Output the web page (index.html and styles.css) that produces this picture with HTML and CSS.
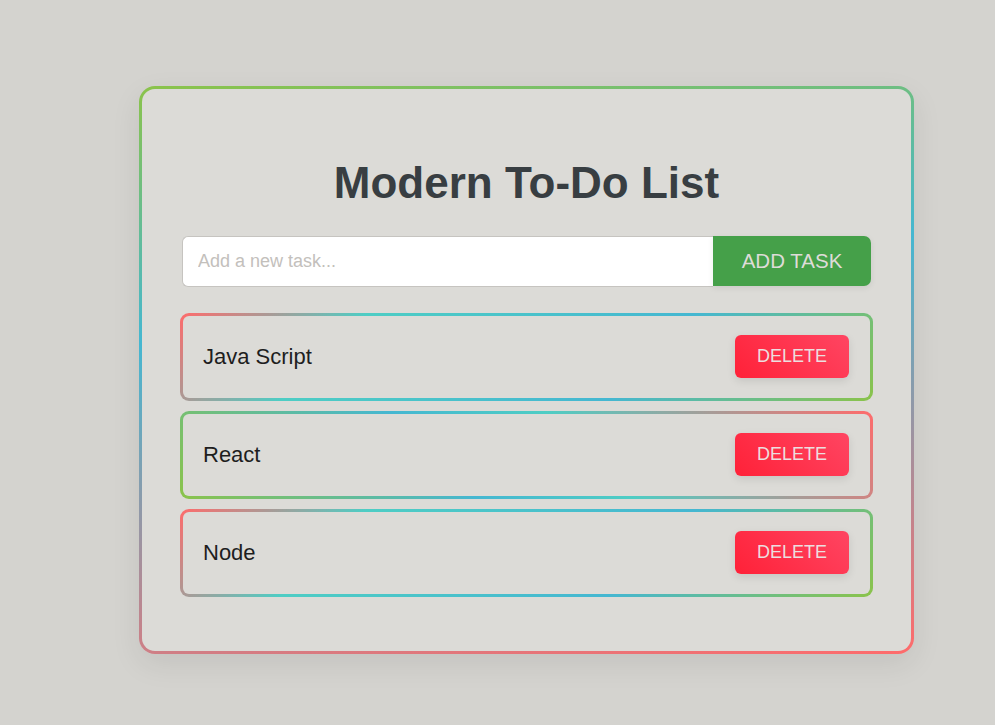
FILE: index.html
```html
<!DOCTYPE html>
<html lang="en">
<head>
<meta charset="utf-8">
<title>Modern To-Do List</title>
<link rel="stylesheet" href="styles.css">
</head>
<body>
  <div class="card">
    <h1 class="title">Modern To-Do List</h1>
    <div class="add-row">
      <input class="task-input" type="text" placeholder="Add a new task...">
      <button class="add-btn">ADD TASK</button>
    </div>
    <ul class="task-list">
      <li class="task task-a"><span class="task-text">Java Script</span><button class="del-btn">DELETE</button></li>
      <li class="task task-b"><span class="task-text">React</span><button class="del-btn">DELETE</button></li>
      <li class="task task-a"><span class="task-text">Node</span><button class="del-btn">DELETE</button></li>
    </ul>
  </div>
</body>
</html>
```

FILE: styles.css
```css
html, body {
  margin: 0;
  padding: 0;
}
body {
  background: #d4d3cf;
  font-family: "Liberation Sans", Arial, sans-serif;
  min-height: 725px;
  overflow: hidden;
}
.card {
  box-sizing: border-box;
  width: 775px;
  margin: 86px 0 0 139px;
  padding: 40px 40px 54px;
  border: 3px solid transparent;
  border-radius: 16px;
  background:
    linear-gradient(#dcdbd7, #dcdbd7) padding-box,
    linear-gradient(172deg, #8bc34a 0%, #45b7d1 38%, #ff6b6b 100%) border-box;
  box-shadow: 0 10px 30px rgba(0, 0, 0, 0.08);
}
.title {
  margin: 28.8px 0 29px;
  font-size: 44px;
  line-height: 49px;
  font-weight: bold;
  text-align: center;
  color: #383e42;
}
.add-row {
  display: flex;
}
.task-input {
  flex: 1;
  min-width: 0;
  box-sizing: border-box;
  height: 51px;
  padding: 0 15px;
  border: 1px solid #c6c4c0;
  border-right: none;
  border-radius: 6px 0 0 6px;
  background: #ffffff;
  font-family: "Liberation Sans", Arial, sans-serif;
  font-size: 18px;
  color: #333;
  outline: none;
}
.task-input::placeholder {
  color: #c3c0bc;
}
.add-btn {
  box-sizing: border-box;
  width: 158px;
  height: 50px;
  border: none;
  border-radius: 0 7px 7px 0;
  background: #45a049;
  color: #dedcd8;
  font-family: "Liberation Sans", Arial, sans-serif;
  font-size: 20.5px;
  box-shadow: 0 2px 6px rgba(0, 0, 0, 0.08);
}
.task-list {
  list-style: none;
  margin: 26px -2px 0;
  padding: 0;
  display: flex;
  flex-direction: column;
  gap: 10px;
}
.task {
  box-sizing: border-box;
  height: 88px;
  display: flex;
  align-items: center;
  justify-content: space-between;
  padding: 0 21px 0 20px;
  border: 3px solid transparent;
  border-radius: 9px;
}
.task-a {
  background:
    linear-gradient(#dcdbd7, #dcdbd7) padding-box,
    linear-gradient(135deg, #ff6b6b 0%, #4ecdc4 24%, #45b7d1 66%, #8bc34a 100%) border-box;
}
.task-b {
  background:
    linear-gradient(#dcdbd7, #dcdbd7) padding-box,
    linear-gradient(45deg, #8bc34a 0%, #45b7d1 38%, #4ecdc4 58%, #ff6b6b 100%) border-box;
}
.task-text {
  font-size: 22px;
  color: #1e1e1e;
}
.del-btn {
  box-sizing: border-box;
  width: 114px;
  height: 43px;
  border: none;
  border-radius: 6px;
  background: linear-gradient(45deg, #ff2138, #ff4562);
  color: #ecdedf;
  font-family: "Liberation Sans", Arial, sans-serif;
  font-size: 18px;
  box-shadow: 0 3px 8px rgba(0, 0, 0, 0.1);
}
```
